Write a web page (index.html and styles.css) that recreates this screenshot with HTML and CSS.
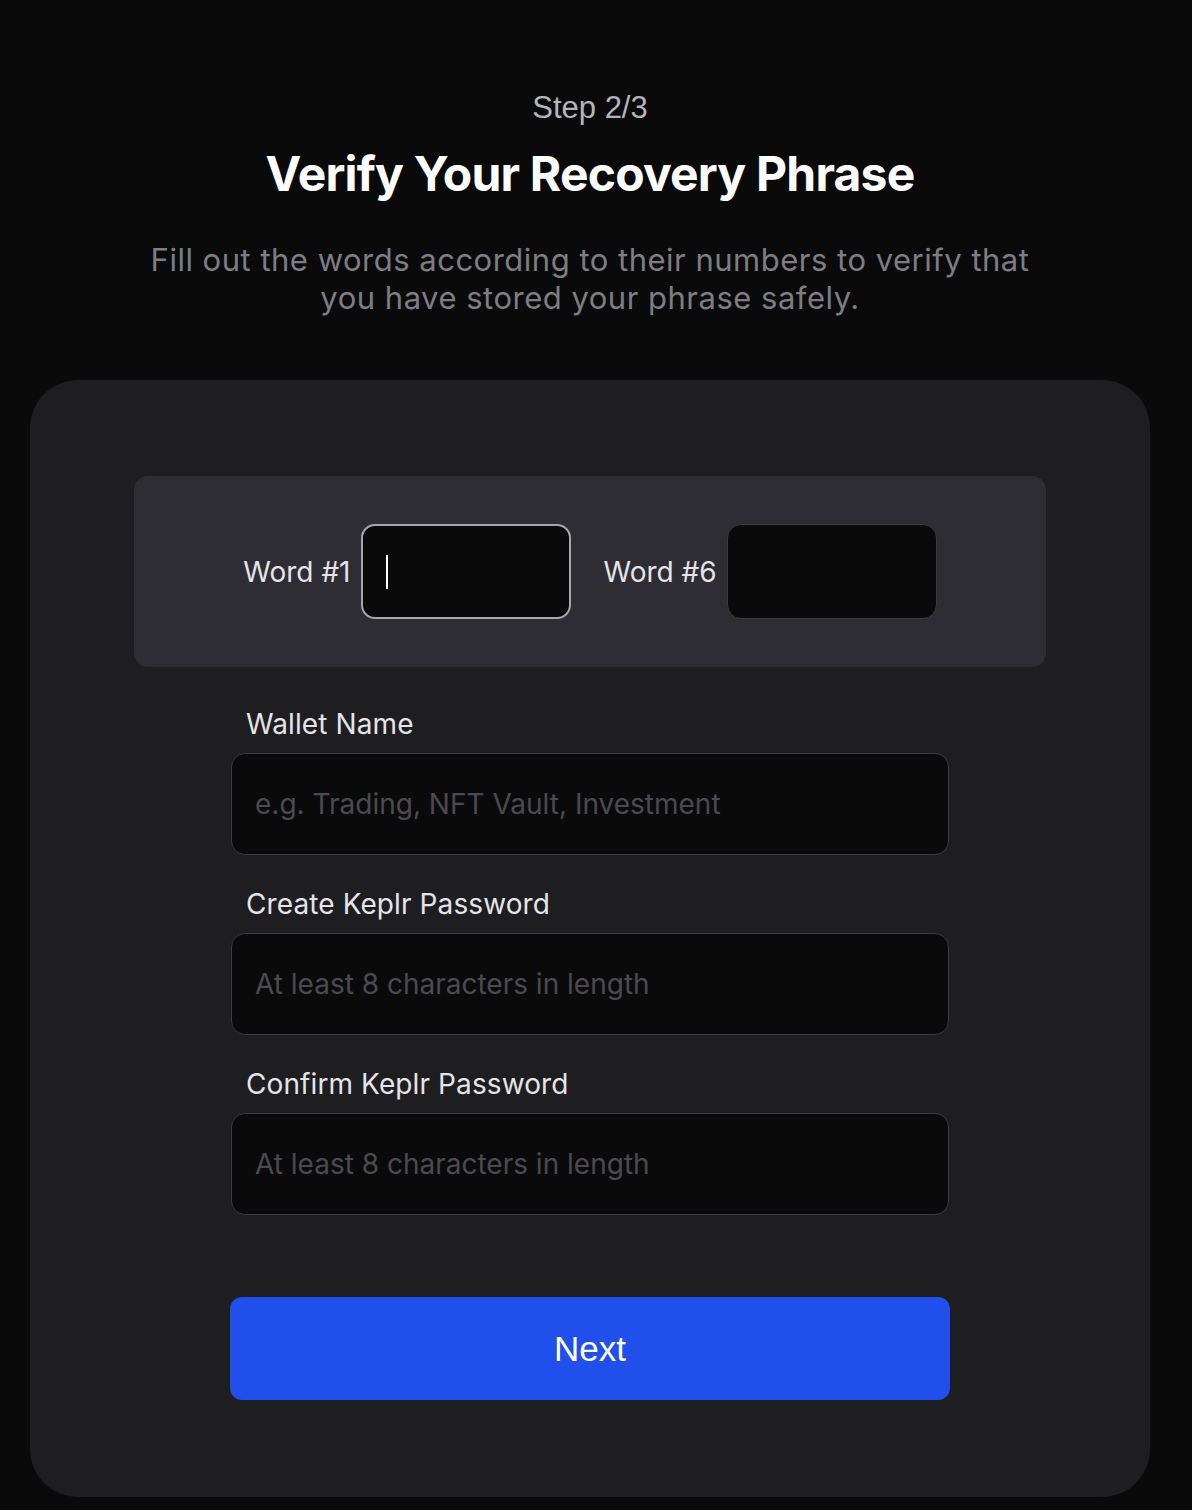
FILE: index.html
```html
<!DOCTYPE html>
<html lang="en">
<head>
<meta charset="utf-8">
<title>Verify Your Recovery Phrase</title>
<link rel="stylesheet" href="styles.css">
</head>
<body>
<main class="page">
  <header class="intro">
    <div class="step">Step 2/3</div>
    <h1 class="title">Verify Your Recovery Phrase</h1>
    <p class="subtitle">Fill out the words according to their numbers to verify that you have stored your phrase safely.</p>
  </header>
  <section class="card">
    <div class="words">
      <label class="word">
        <span class="word-label">Word #1</span>
        <span class="word-input focused"><span class="caret"></span></span>
      </label>
      <label class="word">
        <span class="word-label">Word #6</span>
        <span class="word-input"></span>
      </label>
    </div>
    <div class="form">
      <div class="field">
        <div class="field-label">Wallet Name</div>
        <div class="input"><span class="placeholder">e.g. Trading, NFT Vault, Investment</span></div>
      </div>
      <div class="field">
        <div class="field-label">Create Keplr Password</div>
        <div class="input"><span class="placeholder">At least 8 characters in length</span></div>
      </div>
      <div class="field">
        <div class="field-label">Confirm Keplr Password</div>
        <div class="input"><span class="placeholder">At least 8 characters in length</span></div>
      </div>
      <button class="next" type="button">Next</button>
    </div>
  </section>
</main>
</body>
</html>
```
FILE: styles.css
```css
* { box-sizing: border-box; }
html, body {
  margin: 0;
  padding: 0;
  background: #0a0a0b;
  font-family: Inter, "Noto Sans", sans-serif;
}
.page {
  width: 1192px;
  padding: 0 42px 13px 30px;
}
.intro {
  display: flex;
  flex-direction: column;
  align-items: center;
  text-align: center;
  padding-top: 88px;
}
.step {
  font-family: "Liberation Sans", Arial, sans-serif;
  font-size: 31px;
  line-height: 40px;
  color: #b4b4ba;
}
.title {
  margin: 17px 0 0;
  font-family: Inter, sans-serif;
  font-weight: 700;
  font-size: 48px;
  line-height: 58px;
  letter-spacing: -0.8px;
  color: #ffffff;
}
.subtitle {
  margin: 38px 0 0;
  width: 890px;
  font-size: 31px;
  line-height: 38px;
  color: #7d7d84;
  letter-spacing: 0.5px;
}
.card {
  margin-top: 63px;
  background: #1e1e20;
  border-radius: 48px;
  padding: 96px 104px 97px;
}
.words {
  background: #2e2d33;
  border-radius: 14px;
  height: 191px;
  display: flex;
  align-items: center;
  justify-content: center;
  gap: 33px;
}
.word {
  display: flex;
  align-items: center;
  gap: 10px;
}
.word-label {
  font-size: 28px;
  color: #e4e4ea;
}
.word-input {
  position: relative;
  width: 210px;
  height: 95px;
  background: #0a0a0b;
  border: 1.5px solid #3a3a40;
  border-radius: 14px;
  display: flex;
  align-items: center;
  padding-left: 23px;
}
.word-input.focused {
  border: 2px solid #a6a6ae;
}
.caret {
  width: 2px;
  height: 34px;
  background: #ffffff;
}
.form {
  width: 720px;
  margin: 0 auto;
  display: flex;
  flex-direction: column;
}
.field {
  margin-top: 32px;
}
.field:first-child {
  margin-top: 40px;
}
.field-label {
  padding-left: 16px;
  font-size: 28px;
  line-height: 34px;
  letter-spacing: 0.1px;
  color: #e4e4ea;
  margin-bottom: 12px;
}
.input {
  height: 102px;
  width: 718px;
  margin-left: 1px;
  background: #0a0a0b;
  border: 1.5px solid #3a3a40;
  border-radius: 14px;
  display: flex;
  align-items: center;
  padding-left: 23px;
}
.placeholder {
  font-size: 28px;
  color: #4a4a50;
}
.next {
  margin-top: 82px;
  height: 103px;
  width: 720px;
  border: none;
  border-radius: 12px;
  background: #214fec;
  color: #ffffff;
  font-family: "Liberation Sans", Arial, sans-serif;
  font-size: 35px;
}
```
